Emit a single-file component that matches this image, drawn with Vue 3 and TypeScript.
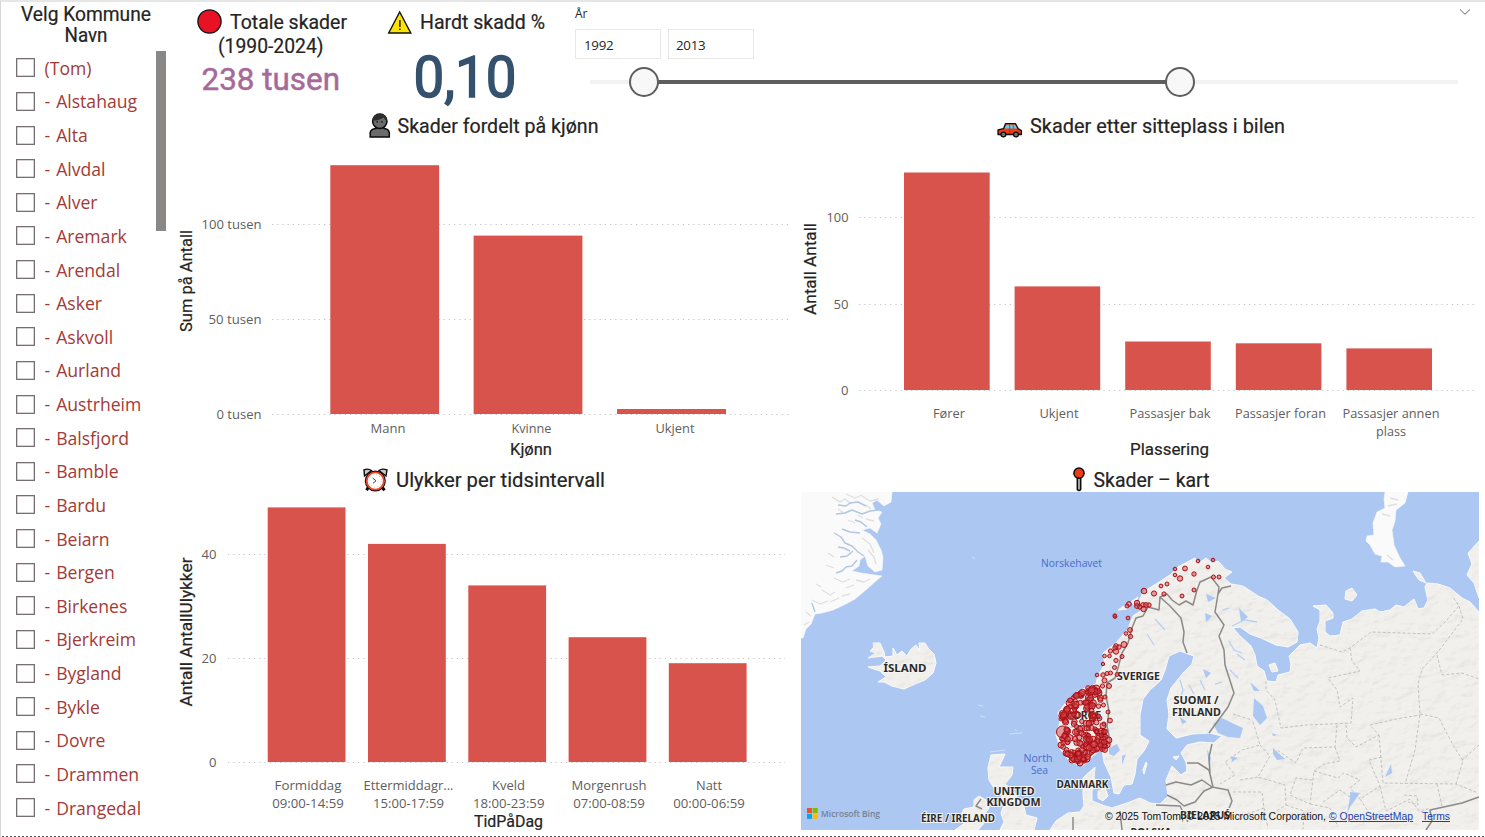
<script setup lang="ts">
interface Label { t: string; x: number; y: number; w: number }
interface Bar { x: number; y: number; w: number }
interface Chart {
  id: string
  view: string
  base: number
  grid: number[]
  x1: number
  x2: number
  ticks: Label[]
  bars: Bar[]
  cats: Label[]
  title: Label
  xTitle: Label
  yTitle: Label
}

const kommuner: string[] = [
  '(Tom)', '- Alstahaug', '- Alta', '- Alvdal', '- Alver', '- Aremark', '- Arendal', '- Asker',
  '- Askvoll', '- Aurland', '- Austrheim', '- Balsfjord', '- Bamble', '- Bardu', '- Beiarn',
  '- Bergen', '- Birkenes', '- Bjerkreim', '- Bygland', '- Bykle', '- Dovre', '- Drammen', '- Drangedal',
]

const charts: Chart[] = [
  {
    id: 'gender', view: '172 110 623 355', base: 414, grid: [224.5, 319.5, 414.5], x1: 272, x2: 790,
    ticks: [{ t: '100 tusen', x: 261.5, y: 229, w: 60 }, { t: '50 tusen', x: 261.5, y: 324, w: 53 }, { t: '0 tusen', x: 261.5, y: 419, w: 45 }],
    bars: [{ x: 330.3, y: 165.2, w: 108.8 }, { x: 473.6, y: 235.6, w: 108.8 }, { x: 617, y: 409, w: 109 }],
    cats: [{ t: 'Mann', x: 388, y: 433, w: 35 }, { t: 'Kvinne', x: 531.5, y: 433, w: 40 }, { t: 'Ukjent', x: 675, y: 433, w: 39 }],
    title: { t: 'Skader fordelt på kjønn', x: 397.5, y: 133.4, w: 201 },
    xTitle: { t: 'Kjønn', x: 531, y: 455, w: 42 }, yTitle: { t: 'Sum på Antall', x: 192, y: 281, w: 102 },
  },
  {
    id: 'seat', view: '795 110 690 355', base: 390, grid: [217.5, 304.5, 390.5], x1: 859, x2: 1477,
    ticks: [{ t: '100', x: 848.5, y: 222, w: 22 }, { t: '50', x: 848.5, y: 309, w: 15 }, { t: '0', x: 848.5, y: 395, w: 7.5 }],
    bars: [{ x: 904, y: 172.5, w: 85.7 }, { x: 1014.6, y: 286.4, w: 85.6 }, { x: 1125.2, y: 341.5, w: 85.6 }, { x: 1235.8, y: 343.3, w: 85.6 }, { x: 1346.4, y: 348.4, w: 85.6 }],
    cats: [
      { t: 'Fører', x: 949, y: 418, w: 32 }, { t: 'Ukjent', x: 1059, y: 418, w: 39 },
      { t: 'Passasjer bak', x: 1170, y: 418, w: 81 }, { t: 'Passasjer foran', x: 1280.5, y: 418, w: 91 },
      { t: 'Passasjer annen', x: 1391, y: 418, w: 97 }, { t: 'plass', x: 1391, y: 436, w: 30 },
    ],
    title: { t: 'Skader etter sitteplass i bilen', x: 1030, y: 133.4, w: 255 },
    xTitle: { t: 'Plassering', x: 1169.5, y: 455, w: 79 }, yTitle: { t: 'Antall Antall', x: 816, y: 269, w: 92 },
  },
  {
    id: 'time', view: '172 465 623 372', base: 762, grid: [554.5, 658.5, 762.5], x1: 228, x2: 785,
    ticks: [{ t: '40', x: 216.5, y: 559, w: 15 }, { t: '20', x: 216.5, y: 663, w: 15 }, { t: '0', x: 216.5, y: 767, w: 7.5 }],
    bars: [{ x: 267.7, y: 507.4, w: 77.8 }, { x: 368, y: 543.9, w: 77.8 }, { x: 468.3, y: 585.4, w: 77.8 }, { x: 568.6, y: 637.2, w: 77.8 }, { x: 668.8, y: 663.2, w: 77.8 }],
    cats: [
      { t: 'Formiddag', x: 308, y: 790, w: 67 }, { t: 'Ettermiddagr...', x: 408.5, y: 790, w: 90 }, { t: 'Kveld', x: 508.5, y: 790, w: 33 },
      { t: 'Morgenrush', x: 609, y: 790, w: 75 }, { t: 'Natt', x: 709, y: 790, w: 26 },
      { t: '09:00-14:59', x: 308, y: 808, w: 71.5 }, { t: '15:00-17:59', x: 408.5, y: 808, w: 71 }, { t: '18:00-23:59', x: 508.7, y: 808, w: 71.5 },
      { t: '07:00-08:59', x: 609, y: 808, w: 71.5 }, { t: '00:00-06:59', x: 709, y: 808, w: 71.5 },
    ],
    title: { t: 'Ulykker per tidsintervall', x: 396, y: 487.4, w: 209 },
    xTitle: { t: 'TidPåDag', x: 508.5, y: 827, w: 69 }, yTitle: { t: 'Antall AntallUlykker', x: 192, y: 632, w: 149 },
  },
]

const range = { min: 590, max: 1458, from: 644, to: 1180 }
const pct = (v: number): string => `${((v - range.min) / (range.max - range.min)) * 100}%`

/* Municipalities drawn as bubbles: [x, y, radius] */
const bubbles: number[][] = [
  [1198, 561, 1.8], [1213, 560, 1.8], [1208, 567, 1.8], [1185, 568.5, 2.4], [1175, 569, 1.8], [1175, 575, 1.8], [1180, 578.5, 2.7],
  [1194, 574, 2.2], [1213.5, 577, 2], [1219, 577, 2], [1161, 586, 1.9], [1167, 584, 2], [1144, 591, 2.8], [1154, 593.5, 2.6],
  [1164, 594, 2.1], [1182, 596, 2], [1194, 590, 2], [1129, 604, 2.4], [1127, 606, 2], [1137, 603, 2.7], [1137, 606, 2.4], [1140, 607, 2.2],
  [1143, 605, 2.4], [1146, 605, 2.4], [1149, 605, 2.2], [1143.5, 609, 2.7], [1115, 616.5, 1.9], [1114.8, 615.5, 1.7], [1128, 618, 1.9],
  [1130, 630, 2.4], [1126, 633.5, 1.8], [1130.5, 636.5, 2.2], [1124, 644.5, 3], [1116, 646, 2.3], [1119, 647, 2.2], [1115, 648, 2.2],
  [1110.5, 651, 2.1], [1116, 651.5, 2.7], [1104.5, 656, 1.8], [1109.5, 656, 1.8], [1122, 656.5, 2], [1116, 660.5, 2.1], [1103, 664, 1.7],
  [1114.5, 667.5, 2], [1097, 675, 1.8], [1103, 675, 2.2], [1107, 673.5, 2], [1110.5, 673, 2], [1117, 674.5, 1.9], [1104.5, 680.5, 2.5],
  [1102.5, 686, 2.1], [1109, 686, 2.5], [1105, 697, 2], [1103.5, 705, 2], [1108, 712, 2], [1110, 720.5, 2.4], [1062.5, 732, 6],
  [1061, 719, 2], [1062, 713, 2.4], [1066, 709, 2.2], [1069, 703, 3], [1079, 695, 3], [1088, 688, 2.3], [1096, 689, 4], [1098, 693, 4],
  [1061, 745, 3], [1066, 753, 3], [1072, 760, 3], [1080, 763, 3], [1087, 759, 3],
]
const area: number[][] = [
  [1087, 688], [1100, 688], [1101, 697], [1099, 710], [1102, 722], [1108, 728], [1110, 742], [1105, 751], [1095, 750],
  [1088, 758], [1081, 764], [1070, 758], [1062, 747], [1061, 737], [1067, 728], [1061, 716], [1068, 702], [1078, 693],
]
const inside = (x: number, y: number): boolean => {
  let hit = false
  for (let i = 0, j = area.length - 1; i < area.length; j = i++) {
    const [xi, yi] = area[i]
    const [xj, yj] = area[j]
    if (yi > y !== yj > y && x < ((xj - xi) * (y - yi)) / (yj - yi) + xi) hit = !hit
  }
  return hit
}
let seed = 90211
const rnd = (): number => {
  seed = (seed * 48271) % 2147483647
  return seed / 2147483647
}
let placed = 0
while (placed < 225) {
  const x = 1056 + rnd() * 56
  const y = 684 + rnd() * 84
  const dense = (x > 1086 && y > 728) || y > 750 || (x < 1068 && y > 700) || (y < 697 && x > 1090)
  if (!inside(x, y) || (!dense && rnd() > 0.36)) continue
  bubbles.push([x, y, 1.9 + rnd() * 1.4])
  placed++
}

const places: Label[] = [
  { t: 'ÍSLAND', x: 905, y: 671.5, w: 43 }, { t: 'SVERIGE', x: 1138.5, y: 679.5, w: 43 }, { t: 'SUOMI /', x: 1196, y: 704, w: 45 },
  { t: 'FINLAND', x: 1196.5, y: 715.7, w: 49 }, { t: 'NORGE', x: 1082.5, y: 719.3, w: 37 }, { t: 'DANMARK', x: 1082.5, y: 787.5, w: 52 },
  { t: 'UNITED', x: 1014, y: 794.5, w: 41 }, { t: 'KINGDOM', x: 1013.5, y: 806, w: 54 }, { t: 'ÉIRE / IRELAND', x: 958, y: 822.2, w: 74 },
  { t: 'BIELARUŚ', x: 1205, y: 819, w: 50 }, { t: 'POLSKA', x: 1151, y: 836, w: 41 },
]
</script>

<template>
  <div class="report">
    <aside class="slicer-list">
      <svg class="list-title" width="171" height="48" viewBox="0 0 171 48">
        <text class="din" x="86" y="20.5" text-anchor="middle" textLength="130" lengthAdjust="spacingAndGlyphs">Velg Kommune</text>
        <text class="din" x="86" y="42.4" text-anchor="middle" textLength="43" lengthAdjust="spacingAndGlyphs">Navn</text>
      </svg>
      <div class="list-body">
        <ul>
          <li v-for="k in kommuner" :key="k"><span class="box"></span><span>{{ k }}</span></li>
        </ul>
        <div class="scrollbar"></div>
      </div>
    </aside>

    <main>
      <header>
        <svg class="kpis" width="393" height="108" viewBox="172 2 393 108">
          <circle cx="209.5" cy="21.5" r="11.6" fill="#e81224" stroke="#111" stroke-width="1.3" />
          <text class="din" x="230" y="29.4" textLength="117" lengthAdjust="spacingAndGlyphs">Totale skader</text>
          <text class="din" x="218" y="53.2" textLength="105.5" lengthAdjust="spacingAndGlyphs">(1990-2024)</text>
          <text class="din total" x="201.5" y="90" textLength="138.5" lengthAdjust="spacingAndGlyphs">238 tusen</text>
          <path d="M399.7 12 L410.8 33 H388.7 Z" fill="#ffe300" stroke="#111" stroke-width="1.4" stroke-linejoin="miter" />
          <path d="M399.9 20 V27 M399.9 28.5 V30" stroke="#111" stroke-width="1.4" />
          <text class="din" x="420" y="29.4" textLength="125" lengthAdjust="spacingAndGlyphs">Hardt skadd %</text>
          <text class="din severe" x="413.5" y="96.5" textLength="103" lengthAdjust="spacingAndGlyphs">0,10</text>
        </svg>
        <section class="year">
          <div class="year-head">
            <span>År</span>
            <svg width="12" height="8" viewBox="0 0 12 8"><path d="M1 1.5 L6 6.3 L11 1.5" fill="none" stroke="#666" stroke-width="1" /></svg>
          </div>
          <div class="inputs"><span>1992</span><span>2013</span></div>
          <div class="slider">
            <div class="fill" :style="{ left: pct(range.from), right: `calc(100% - ${pct(range.to)})` }"></div>
            <i class="knob" :style="{ left: pct(range.from) }"></i>
            <i class="knob" :style="{ left: pct(range.to) }"></i>
          </div>
        </section>
      </header>

      <div class="visuals">
        <svg v-for="c in charts" :key="c.id" :class="c.id" :viewBox="c.view">
          <g v-if="c.id === 'gender'" stroke="#0b0b0b" stroke-width="1.5">
            <path d="M370.2 137 V132.5 Q371 128.6 376 128.4 L376.5 126 H383.5 L384 128.4 Q388.5 128.6 389.3 132.5 V137 Z" fill="#6b6b6b" />
            <circle cx="379.8" cy="121.3" r="7.2" fill="#6b6b6b" />
            <path d="M372.7 120.5 Q372.5 113.8 380 113.8 Q386.8 113.8 386.9 120.5 Q384.5 120 383.7 117.4 Q379 120.6 372.7 120.5Z" fill="#2d2d2d" stroke="none" />
            <path d="M377.3 121.3 v1.2 M382 121.3 v1.2" />
          </g>
          <g v-if="c.id === 'seat'" stroke="#0b0b0b" stroke-width="1.3" stroke-linejoin="round">
            <path d="M998 134.5 V130 L1003.5 128.7 L1005.5 123.7 H1015.5 L1018.3 128.7 L1021.4 130.6 V134.5 Z" fill="#f03a17" />
            <path d="M1004.6 128.6 L1006.3 124.7 H1014.9 L1017 128.6Z" fill="#4fd2f3" stroke="none" />
            <path d="M1009.7 124.5 V134 M1013.2 124.5 V128.5" stroke="#9c2a18" stroke-width=".8" />
            <circle cx="1003.4" cy="134.5" r="2.4" fill="#777" /><circle cx="1016" cy="134.5" r="2.4" fill="#777" />
          </g>
          <g v-if="c.id === 'time'" stroke="#0b0b0b" stroke-width="1.4">
            <path d="M368.5 487 L366.5 490.3 M382 487 L384.5 490.3" stroke-width="3" />
            <path d="M364.5 476 L364 470 Q368 468 371.5 470.5Z M386 476 L387 470 Q382 468 379 470.5Z" fill="#c9c9c9" />
            <circle cx="375.3" cy="481" r="9.8" fill="#fff" />
            <circle cx="375.3" cy="481" r="8.6" fill="#fff" stroke="#ef4123" stroke-width="1.9" />
            <circle cx="375.3" cy="481" r="6.2" fill="none" stroke="#999" stroke-width=".7" stroke-dasharray=".8 2.45" />
            <path d="M372.7 478 L376 480.8 L373 483.3" fill="none" stroke="#333" stroke-width=".9" />
          </g>

          <text class="din" :x="c.title.x" :y="c.title.y" :textLength="c.title.w" lengthAdjust="spacingAndGlyphs">{{ c.title.t }}</text>
          <line v-for="g in c.grid" :key="g" class="grid" :x1="c.x1" :x2="c.x2" :y1="g" :y2="g" />
          <rect v-for="b in c.bars" :key="b.x" class="bar" :x="b.x" :y="b.y" :width="b.w" :height="c.base - b.y" />
          <text v-for="t in c.ticks" :key="t.t" class="axis" text-anchor="end" :x="t.x" :y="t.y" :textLength="t.w" lengthAdjust="spacingAndGlyphs">{{ t.t }}</text>
          <text v-for="t in c.cats" :key="t.t" class="axis" text-anchor="middle" :x="t.x" :y="t.y" :textLength="t.w" lengthAdjust="spacingAndGlyphs">{{ t.t }}</text>
          <text class="din axis-title" text-anchor="middle" :x="c.xTitle.x" :y="c.xTitle.y" :textLength="c.xTitle.w" lengthAdjust="spacingAndGlyphs">{{ c.xTitle.t }}</text>
          <text class="din axis-title" text-anchor="middle" :transform="`translate(${c.yTitle.x} ${c.yTitle.y}) rotate(-90)`" :textLength="c.yTitle.w" lengthAdjust="spacingAndGlyphs">{{ c.yTitle.t }}</text>
        </svg>

        <svg class="map" viewBox="795 465 690 372">
          <defs>
            <clipPath id="frame"><rect x="801" y="492" width="678" height="338" /></clipPath>
            <filter id="relief" x="0" y="0" width="1" height="1" color-interpolation-filters="sRGB">
              <feTurbulence type="fractalNoise" baseFrequency=".07 .11" numOctaves="3" seed="8" result="n" />
              <feDiffuseLighting in="n" surfaceScale=".5" diffuseConstant="1.05" lighting-color="#ffffff" result="l"><feDistantLight azimuth="225" elevation="72" /></feDiffuseLighting>
              <feComposite in="l" in2="SourceGraphic" operator="in" result="c" />
              <feBlend in="SourceGraphic" in2="c" mode="multiply" />
            </filter>
          </defs>
          <path d="M1077.3 477 H1080.7 V489.5 Q1079 491.5 1077.3 489.5Z" fill="#aaa" stroke="#0b0b0b" stroke-width="1.5" />
          <circle cx="1079" cy="473.2" r="5.1" fill="#f03a17" stroke="#0b0b0b" stroke-width="1.5" />
          <text class="din" x="1093.5" y="487.4" textLength="116" lengthAdjust="spacingAndGlyphs">Skader – kart</text>

          <g clip-path="url(#frame)">
            <rect x="801" y="492" width="678" height="338" fill="#abc7f2" />
            <g class="land snow">
              <path d="M801 492 H892 L891 502 L884 506 L877 500 L872 503 L875 510 L882 512 L878 518 L881 524 L877 533 L870 528 L862 530 L870 534 L876 540 L881 550 L883 557 L882 570 L875 572 L868 566 L865 556 L860 560 L859 566 L852 571 L861 573 L882 576 L877 580 L867 589 L855 599 L846 604 L833 610 L822 613 L815 614 L811 624 L806 629 L803 638 L801 638 Z" />
              <path d="M1385 492 H1408 L1405 503 L1396 510 L1395 521 L1392 530 L1394 545 L1400 558 L1405 566 L1395 567 L1388 562 L1381 562 L1382 556 L1375 554 L1370 545 L1366 541 L1367 536 L1374 535 L1373 523 L1377 512 L1385 508 L1384 499 Z" />
            </g>
            <path class="ridges" d="M832 497 l8 5 5 -3 6 5 M846 494 l9 4 7 -3 M862 496 l8 5 9 -2 M838 509 l6 4 M866 505 l5 4 M848 520 l7 3 M858 515 l5 3 M866 519 l8 2 M862 538 l8 6 4 9 M868 550 l6 7 2 7 M828 553 l6 4 M826 565 l8 3 M834 578 l9 4 7 -3 M846 588 l8 -3 M822 590 l8 5 5 -3 M812 600 l8 4 8 -3 M830 602 l9 -4 M856 580 l8 2 6 -3 M806 612 l5 4 M804 625 l5 -3 M816 584 l5 3 M842 596 l8 -2 M1390 498 l8 2 M1388 506 l9 -2 M1382 514 l8 2 M1387 555 l6 5" />
            <path class="fjord" d="M836 514 L845 513 L852 510 L862 514 L870 511 L878 510 M838 505 L846 506 L850 503 L858 502 L866 506 M834 533 L841 537 L845 543 L852 546 L858 552 L864 556 M842 529 L850 532 L860 533 M840 557 L847 556 L853 551 M836 573 L842 571 L846 567 L852 566 L857 560 M838 547 L844 548 L850 551 M855 520 L861 522 L867 527 M812 603 L815 612" />
            <g class="land" filter="url(#relief)">
              <path d="M893 648 L897 655 L902 651 L907 656 L911 649 L916 645 L920 651 L919 643 L925 643 L928 648 L934 654 L936 663 L933 673 L925 680 L915 684 L904 689 L892 686 L884 682 L878 682 L886 677 L880 671 L868 667 L880 666 L886 660 L882 656 L868 658 L876 653 L870 651 L874 647 L873 643 L880 643 L884 652 L885 657 L893 656 Z" />
              <path d="M991 755 L1005 754 L1001 763 L999 767 L1013 767 L1012 775 L1005 784 L1013 790 L1018 799 L1024 807 L1026 815 L1037 818 L1034 830 H1000 L1004 822 L1001 813 L1004 805 L1001 795 L994 788 L989 780 L988 768 Z" />
              <path d="M974 800 L979 796 L986 800 L989 808 L984 815 L985 822 L978 830 H955 L965 823 L960 817 L964 809 L974 807 Z" />
              <path d="M1195 558 L1199 563 L1206 558 L1212 563 L1218 561 L1225 569 L1232 572 L1224 578 L1231 584 L1243 586 L1258 596 L1267 600 L1278 610 L1290 619 L1298 632 L1297 642 L1288 647 L1276 645 L1261 638 L1250 634 L1240 627 L1233 628 L1240 636 L1251 646 L1255 655 L1257 666 L1264 671 L1267 681 L1276 682 L1278 675 L1290 672 L1291 664 L1289 656 L1300 645 L1310 643 L1317 648 L1319 638 L1317 629 L1320 621 L1320 610 L1313 606 L1326 605 L1333 613 L1333 618 L1325 621 L1325 632 L1330 636 L1340 635 L1343 622 L1352 619 L1362 611 L1375 609 L1380 612 L1390 610 L1396 605 L1404 607 L1414 599 L1418 609 L1424 608 L1428 600 L1425 587 L1427 583 L1438 584 L1450 588 L1462 598 L1470 602 L1479 612 V830 H1050 L1056 821 L1068 813 L1080 812 L1084 806 L1083 795 L1083 778 L1095 767 L1094 778 L1098 783 L1092 790 L1092 801 L1105 806 L1112 808 L1127 803 L1140 798 L1150 803 L1160 804 L1168 796 L1166 780 L1172 766 L1181 775 L1187 771 L1186 762 L1181 753 L1187 745 L1200 742 L1214 743 L1222 736 L1210 733 L1192 734 L1176 738 L1167 729 L1169 714 L1167 700 L1171 688 L1184 672 L1192 664 L1194 656 L1180 651 L1169 656 L1165 670 L1161 680 L1150 690 L1143 699 L1140 715 L1140 735 L1149 741 L1144 751 L1137 759 L1135 774 L1132 784 L1124 785 L1119 794 L1114 793 L1111 777 L1104 762 L1102 748 L1092 757 L1083 766 L1070 762 L1061 750 L1056 735 L1060 722 L1058 713 L1067 701 L1080 690 L1096 684 L1098 675 L1105 664 L1103 653 L1116 643 L1128 629 L1133 616 L1142 610 L1138 604 L1143 592 L1156 584 L1170 575 L1178 567 Z" />
              <path d="M1346 591 L1352 588 L1357 595 L1352 601 L1345 599Z M1413 571 L1420 573 L1426 583 L1419 580Z M1479 541 L1468 553 L1472 564 L1467 575 L1474 583 L1479 598Z M1098 791 L1105 788 L1108 796 L1103 801 L1098 798Z M1173 757 L1179 756 L1176 760Z M1131 602 L1138 597 L1134 605Z" />
              <path d="M1118 610 L1124 606 L1130 603 L1127 609Z M1143 770 L1146 762 L1147 764 L1144 774Z M1269 665 L1275 663 L1278 671 L1272 672Z" />
            </g>
            <g class="water">
              <path d="M1109 748 L1117 744 L1120 750 L1114 756 L1109 754Z M1122 756 L1126 754 L1122 765Z M1213 724 L1222 718 L1234 724 L1243 728 L1240 738 L1228 737 L1218 733Z M1250 682 L1260 691 L1254 691Z M1254 698 L1263 706 L1267 718 L1260 725 L1253 716Z M1273 748 L1285 759 L1277 760 L1273 754Z M1206 594 L1216 598 L1208 602Z M1205 613 L1212 616 L1206 622Z M1239 608 L1248 617 L1241 622Z M1207 749 L1211 758 L1209 766Z M1203 669 L1211 673 L1206 678Z M1180 717 L1187 722 L1182 724Z M1231 756 L1238 758 L1232 762Z M1272 733 L1278 735 L1273 736Z M1350 792 L1360 793 L1350 807 L1347 815 L1350 797Z M1385 777 L1391 764 L1392 773Z" />
              <path class="streams" d="M1222 610 L1229 608 M1232 626 L1245 620 L1257 622 M1237 654 L1245 660 M1229 641 L1234 650 L1242 653 M1180 680 L1183 690 L1180 700 M1189 685 L1194 694 M1200 680 L1205 690 M1155 619 L1165 630 M1147 634 L1154 645 M1230 670 L1238 678 M1215 684 L1222 682 M1066 728 L1080 726 M1063 716 L1073 713" />
            </g>
            <path class="regions" d="M1320 645 L1342 652 L1350 648 L1371 632 L1432 634 L1445 622 L1459 606 L1453 597 M1459 606 L1463 619 L1450 636 L1437 653 L1422 669 L1418 684 L1420 714 L1415 750 L1405 784 M1350 648 L1352 661 L1360 671 L1328 678 L1337 690 L1340 707 L1353 698 L1351 723 L1330 724 L1306 725 L1281 728 L1275 700 L1266 690 L1266 680 M1437 655 L1442 675 L1462 673 L1479 679 M1420 714 L1439 718 L1453 745 L1463 761 L1456 784 M1479 745 L1461 761 M1346 725 L1347 738 L1356 747 L1379 735 L1370 725 L1396 719 L1420 715 M1379 735 L1383 783 L1456 784 L1478 793 M1337 725 L1335 747 L1303 748 L1296 763 L1277 750 M1335 747 L1340 761 L1324 764 L1314 771 L1310 804 L1290 795 L1296 778 L1312 780 M1253 722 L1260 745 L1242 750 L1225 762 L1235 775 L1220 784 M1260 745 L1270 756 L1258 777 L1285 785 L1286 805 L1267 817 M1233 714 L1252 720 M1240 780 L1258 777 M1233 792 L1262 792 L1264 808 L1239 817 M1314 771 L1338 778 L1344 773 L1360 780 L1350 788 L1360 799 L1380 786 L1369 760 L1382 757 M1323 802 L1340 790 L1350 797 M1310 804 L1330 808 L1338 827 M1380 786 L1386 811 L1410 799 L1420 812 L1430 808 M1360 799 L1371 816 L1391 820 M1437 784 L1442 806 M1286 805 L1304 811 L1303 829 M1264 808 L1268 828 M1404 795 L1417 796 L1418 805 L1408 802" />
            <path class="border" d="M1231 586 L1222 588 L1218 594 L1219 587 L1211 577 L1200 582 L1197 590 L1193 605 L1186 601 L1179 605 L1172 600 L1167 594 L1160 597 L1159 610 L1148 607 L1143 616 L1136 618 L1132 628 L1128 643 L1122 653 L1118 668 L1115 678 L1107 683 L1106 696 L1109 711 L1107 726 L1110 741 L1103 750 M1160 597 L1170 606 L1181 618 L1184 632 L1183 642 L1187 653 M1218 594 L1215 612 L1224 625 L1219 636 L1224 650 L1225 665 L1234 693 L1228 707 L1209 733 M1187 763 L1198 763 L1209 770 L1213 787 M1212 744 L1209 757 L1210 773 M1166 785 L1176 782 L1191 785 L1202 780 L1212 787 L1228 790 L1232 801 L1226 816 M1167 795 L1177 800 L1184 806 L1195 802 L1204 791 L1213 787 M1156 805 L1180 806 L1188 822 M1120 811 L1122 830 M1073 817 L1073 830 M1479 797 L1462 803 L1430 810 L1432 821 L1426 830 M981 799 L976 806 L982 809" />
            <path class="sea-marks" d="M972 557 L975 559 M978 705 L983 706 M980 716 L985 717 M1010 734 L1022 733 M1015 729 L1017 731 M990 752 L1005 750" />

            <g class="sea"><text x="1041" y="567" textLength="61" lengthAdjust="spacingAndGlyphs">Norskehavet</text>
              <text x="1023.5" y="762" textLength="29" lengthAdjust="spacingAndGlyphs">North</text>
              <text x="1031" y="773.5" textLength="17" lengthAdjust="spacingAndGlyphs">Sea</text></g>
            <text v-for="p in places" :key="p.t" class="country" text-anchor="middle" :x="p.x" :y="p.y" :textLength="p.w" lengthAdjust="spacingAndGlyphs">{{ p.t }}</text>
            <circle v-for="(b, i) in bubbles" :key="i" class="bubble" :cx="b[0]" :cy="b[1]" :r="b[2]" />

            <path d="M807 808h5v5h-5z" fill="#f25022" /><path d="M812.7 808h5v5h-5z" fill="#7fba00" />
            <path d="M807 813.8h5v5h-5z" fill="#00a4ef" /><path d="M812.7 813.8h5v5h-5z" fill="#ffb900" />
            <text class="bing" x="821" y="817" textLength="59" lengthAdjust="spacingAndGlyphs">Microsoft Bing</text>
            <g class="credits">
              <text x="1105" y="820" textLength="221" lengthAdjust="spacingAndGlyphs">© 2025 TomTom, © 2025 Microsoft Corporation,</text>
              <text class="link" x="1329" y="820" textLength="84" lengthAdjust="spacingAndGlyphs">© OpenStreetMap</text>
              <text class="link" x="1422" y="820" textLength="28" lengthAdjust="spacingAndGlyphs">Terms</text>
            </g>
          </g>
        </svg>
      </div>
    </main>
    <div class="page-end"></div>
  </div>
</template>

<style>
html, body { margin: 0; overflow: hidden; background: #fff; }
</style>

<style scoped>
.report {
  position: relative; box-sizing: border-box; width: 1485px; height: 837px; overflow: hidden;
  display: flex; background: #fff; border-left: 1px solid #d6d6d6; border-top: 2px solid #e6e6e6;
  font-family: "Open Sans", "Noto Sans", sans-serif;
}
svg { display: block; }
.slicer-list { width: 171px; flex: none; }
.list-title { margin: -2px 0 0 -1px; }
.list-body { display: flex; justify-content: space-between; padding-top: 3px; }
ul { list-style: none; margin: 0; padding: 0 0 0 15px; }
li {
  display: flex; align-items: center; gap: 9.5px; height: 33.64px; white-space: nowrap;
  color: #a33a36; font-size: 17.6px; letter-spacing: 0; word-spacing: 1.4px;
}
.box { box-sizing: border-box; width: 19px; height: 19px; border: 1px solid #767074; box-shadow: inset 0 0 0 .5px #aaa5a8; }
.scrollbar { width: 10px; height: 180px; margin-right: 6px; background: #8a8886; }

main { width: 1313px; flex: none; }
header { display: flex; height: 108px; }
.kpis { flex: none; }
.din { font: 400 19.4px Roboto, sans-serif; fill: #252423; stroke: #252423; stroke-width: .2px; }
.total { font-size: 31.5px; fill: #a66999; stroke: #a66999; stroke-width: .5px; }
.severe { font-size: 57px; fill: #34516d; stroke: #34516d; stroke-width: 1.4px; }
.axis-title { font-size: 16px; }

.year { flex: 1; padding: 3px 14px 0 10px; color: #252423; }
.year-head { display: flex; justify-content: space-between; height: 24px; font-size: 12px; line-height: 17px; }
.year-head svg { margin-top: 3px; }
.inputs { display: flex; gap: 7px; }
.inputs span {
  box-sizing: border-box; width: 86px; height: 30px; padding-left: 8px; line-height: 30px;
  border: 1px solid #e8e8e8; font-size: 13.3px; letter-spacing: -.25px;
}
.inputs span + span { padding-left: 7px; }
.slider { position: relative; width: 868px; height: 4px; margin: 21px 0 0 15px; background: #f3f2f1; }
.fill { position: absolute; top: 0; height: 4px; background: #605e5c; }
.knob {
  position: absolute; top: -13px; width: 30px; height: 30px; margin-left: -15px; box-sizing: border-box;
  border: 2px solid #605e5c; border-radius: 50%; background: #f8f8f8;
}

.visuals { display: grid; grid-template-columns: 623px 690px; grid-template-rows: 355px 372px; }
.visuals svg { width: 100%; height: 100%; }
.grid { stroke: #c8c6c4; stroke-width: 1; stroke-dasharray: 1.3 3.9; }
.bar { fill: #d9534d; }
.axis { font-size: 13.4px; fill: #605e5c; }

.land path { fill: #f1f0ed; stroke: #fbfbfa; stroke-width: .6; stroke-linejoin: round; }
.snow path { fill: #fafafa; }
.ridges { fill: none; stroke: #dfdfdf; stroke-width: 1.3; stroke-linejoin: round; }
.fjord { fill: none; stroke: #b3c6e4; stroke-width: 1.4; stroke-linejoin: round; }
.water path { fill: #abc7f2; }
.water .streams { fill: none; stroke: #b9d0f3; stroke-width: 1.3; }
.regions { fill: none; stroke: #c3c1be; stroke-width: 1; stroke-dasharray: 3 2; stroke-linejoin: round; }
.border { fill: none; stroke: #8b8a88; stroke-width: 1.5; stroke-linejoin: round; }
.sea-marks { fill: none; stroke: #d3e1f7; stroke-width: 1; }
.sea text { font-size: 10.5px; fill: #4a6bc9; }
.country { font: 700 11.4px "Noto Sans", sans-serif; fill: #2b2b2b; paint-order: stroke; stroke: #f5f5f3; stroke-width: 2px; }
.bubble { fill: #d64550; fill-opacity: .5; stroke: #a80f14; stroke-width: 1; }
.bing { font-size: 9.5px; font-weight: 600; fill: #77818f; }
.credits text { font: 10px "Liberation Sans", sans-serif; fill: #111; }
.credits .link { fill: #1a3fae; text-decoration: underline; }

.page-end {
  position: absolute; left: 1px; right: 0; bottom: 0; height: 1px;
  background: repeating-linear-gradient(90deg, #555 0 2px, #fff 2px 4px);
}
</style>
